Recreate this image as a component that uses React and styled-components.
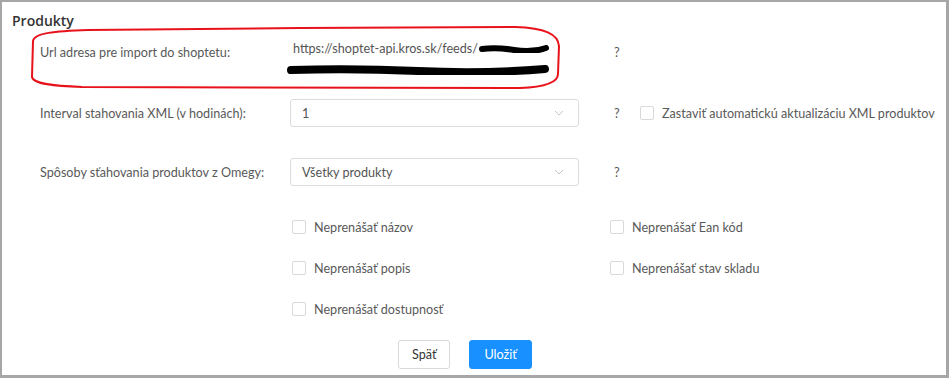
import React from "react";
import styled, { createGlobalStyle } from "styled-components";

const GlobalStyle = createGlobalStyle`
  html, body {
    margin: 0;
    padding: 0;
    background: #ffffff;
  }
  body {
    font-family: Lato, "Open Sans", sans-serif;
    font-size: 12.6px;
    color: #595959;
  }
`;

const checkboxesLeft = ["Neprenášať názov", "Neprenášať popis", "Neprenášať dostupnosť"];
const checkboxesRight = ["Neprenášať Ean kód", "Neprenášať stav skladu"];

const Chevron = () => (
  <svg width="10" height="6" viewBox="0 0 10 6">
    <path d="M1 1 L5 5 L9 1" fill="none" stroke="#c4c4c4" strokeWidth="1" />
  </svg>
);

// redaction marks over the private part of the feed url
const Scribble = ({ width, height }) => (
  <svg width={width} height={height} viewBox={`0 0 ${width} ${height}`}>
    <path
      d={`M4 ${height / 2} Q ${width * 0.25} ${height / 2 - 2}, ${width * 0.5} ${height / 2 + 1} T ${width - 4} ${height / 2 - 1}`}
      fill="none"
      stroke="#000"
      strokeWidth={height - 2}
      strokeLinecap="round"
    />
  </svg>
);

const Annotation = () => (
  <Overlay width="949" height="100" viewBox="0 0 949 100">
    <path
      d="M88 30 C 55 31, 34 33, 33 41 L 32 77 C 33 84, 55 86, 82 87 L 520 88 C 545 87, 558 82, 558 74 L 559 46 C 558 34, 545 28, 515 27 L 300 28 C 200 29, 130 29, 88 30 Z"
      fill="none"
      stroke="#e8121b"
      strokeWidth="2"
    />
  </Overlay>
);

const Checkbox = ({ label }) => (
  <CheckItem>
    <Box />
    <span>{label}</span>
  </CheckItem>
);

export default function App() {
  return (
    <>
      <GlobalStyle />
      <Frame>
        <Annotation />
        <Title>Produkty</Title>

        <UrlRow>
          <Label top={4}>Url adresa pre import do shoptetu:</Label>
          <UrlValue>
            <UrlLine>
              https://shoptet-api.kros.sk/feeds/
              <Scribble width={72} height={8} />
            </UrlLine>
            <UrlLine shift={-6}>
              <Scribble width={262} height={10} />
            </UrlLine>
          </UrlValue>
          <Help top={4}>?</Help>
        </UrlRow>

        <FieldRow gap={19}>
          <Label>Interval stahovania XML (v hodinách):</Label>
          <Select>
            <span>1</span>
            <Chevron />
          </Select>
          <Help>?</Help>
          <CheckItem>
            <Box />
            <span>Zastaviť automatickú aktualizáciu XML produktov</span>
          </CheckItem>
        </FieldRow>

        <FieldRow gap={31}>
          <Label>Spôsoby sťahovania produktov z Omegy:</Label>
          <Select>
            <span>Všetky produkty</span>
            <Chevron />
          </Select>
          <Help>?</Help>
        </FieldRow>

        <Options>
          <OptionColumn>
            {checkboxesLeft.map((item) => (
              <Checkbox key={item} label={item} />
            ))}
          </OptionColumn>
          <OptionColumn>
            {checkboxesRight.map((item) => (
              <Checkbox key={item} label={item} />
            ))}
          </OptionColumn>
        </Options>

        <Actions>
          <Button>Späť</Button>
          <Button primary>Uložiť</Button>
        </Actions>
      </Frame>
    </>
  );
}

const Frame = styled.div`
  position: relative;
  box-sizing: border-box;
  width: 949px;
  height: 378px;
  border-style: solid;
  border-color: #a6a6a6;
  border-width: 2px 3px 3px 2px;
  padding: 8px 0 0 10px;
  overflow: hidden;
`;

const Overlay = styled.svg`
  position: absolute;
  top: -2px;
  left: -2px;
  pointer-events: none;
`;

const Title = styled.div`
  font-family: "Open Sans", sans-serif;
  font-size: 14px;
  line-height: 22px;
  font-weight: 600;
  color: #333333;
`;

const UrlRow = styled.div`
  display: flex;
  align-items: flex-start;
  margin-top: 6px;
  padding-left: 28px;
`;

const FieldRow = styled.div`
  display: flex;
  align-items: center;
  height: 28px;
  margin-top: ${(props) => props.gap}px;
  padding-left: 28px;
`;

const Label = styled.div`
  width: 250px;
  flex-shrink: 0;
  line-height: 21px;
  padding-top: ${(props) => props.top || 0}px;
`;

const UrlValue = styled.div`
  box-sizing: border-box;
  width: 289px;
  flex-shrink: 0;
  padding-left: 3px;
  color: #555555;
`;

const UrlLine = styled.div`
  display: flex;
  align-items: center;
  height: 21px;
  line-height: 21px;
  margin-left: ${(props) => props.shift || 0}px;
  white-space: nowrap;
`;

const Select = styled.div`
  box-sizing: border-box;
  width: 289px;
  height: 28px;
  flex-shrink: 0;
  display: flex;
  align-items: center;
  justify-content: space-between;
  padding: 0 14px 0 11px;
  border: 1px solid #dcdcdc;
  border-radius: 3px;
  color: #555555;
`;

const Help = styled.div`
  width: 26px;
  flex-shrink: 0;
  padding-left: 35px;
  line-height: 21px;
  padding-top: ${(props) => props.top || 0}px;
  color: #555555;
`;

const CheckItem = styled.label`
  display: flex;
  align-items: center;
  gap: 8px;
  height: 22px;
  white-space: nowrap;
`;

const Box = styled.span`
  box-sizing: border-box;
  width: 14px;
  height: 14px;
  border: 1px solid #d9d9d9;
  border-radius: 2px;
  background: #ffffff;
`;

const Options = styled.div`
  display: grid;
  grid-template-columns: 318px auto;
  margin-top: 30px;
  padding-left: 280px;
`;

const OptionColumn = styled.div`
  display: flex;
  flex-direction: column;
  gap: 19px;
`;

const Actions = styled.div`
  display: flex;
  gap: 19px;
  margin-top: 20px;
  padding-left: 386px;
`;

const Button = styled.button`
  box-sizing: border-box;
  height: 29px;
  padding: 0 ${(props) => (props.primary ? "14px" : "13px")};
  font-family: Lato, "Open Sans", sans-serif;
  font-size: 12.6px;
  border-radius: 3px;
  border: 1px solid ${(props) => (props.primary ? "#1890ff" : "#d9d9d9")};
  background: ${(props) => (props.primary ? "#1890ff" : "#ffffff")};
  color: ${(props) => (props.primary ? "#ffffff" : "#333333")};
  cursor: pointer;
`;
